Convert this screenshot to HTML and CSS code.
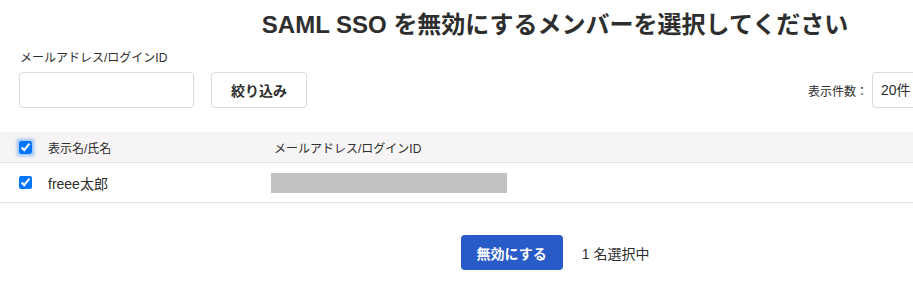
FILE: index.html
```html
<!DOCTYPE html>
<html lang="ja">
<head>
    <meta charset="UTF-8">
    <meta name="viewport" content="width=device-width, initial-scale=1.0">
    <title>SAML SSO 無効化</title>
    <link rel="stylesheet" href="styles.css">
</head>
<body>
    <div class="page">
        <h1 class="title">SAML SSO を無効にするメンバーを選択してください</h1>

        <div class="filters">
            <div class="filter-left">
                <div class="field">
                    <label class="field-label" for="email">メールアドレス/ログインID</label>
                    <input class="text-input" id="email" type="text">
                </div>
                <button class="button-plain">絞り込み</button>
            </div>
            <div class="filter-right">
                <span class="per-page-label">表示件数：</span>
                <div class="select-box">20件</div>
            </div>
        </div>

        <table class="members">
            <thead>
                <tr>
                    <th class="col-check"><input type="checkbox" class="check check-focus" checked></th>
                    <th class="col-name">表示名/氏名</th>
                    <th class="col-mail">メールアドレス/ログインID</th>
                </tr>
            </thead>
            <tbody>
                <tr>
                    <td class="col-check"><input type="checkbox" class="check" checked></td>
                    <td class="col-name">freee太郎</td>
                    <td class="col-mail"><span class="masked"></span></td>
                </tr>
            </tbody>
        </table>

        <div class="actions">
            <button class="button-primary">無効にする</button>
            <span class="selected-count">1 名選択中</span>
        </div>
    </div>
</body>
</html>
```

FILE: styles.css
```css
body {
    margin: 0;
    font-family: 'Liberation Sans', 'Noto Sans CJK JP', sans-serif;
    color: #2e2e2e;
    background: #fff;
    overflow: hidden;
}

.page {
    width: 1110px;
}

.title {
    margin: 0;
    padding-top: 9px;
    font-size: 24px;
    line-height: 32px;
    font-weight: bold;
    text-align: center;
}

.filters {
    display: flex;
    align-items: flex-end;
    margin-top: 9px;
    padding: 0 148px 0 19px;
}

.filter-left {
    display: flex;
    align-items: flex-end;
    gap: 17px;
}

.field {
    display: flex;
    flex-direction: column;
}

.field-label {
    font-size: 12px;
    line-height: 16px;
    margin-bottom: 6px;
    padding-left: 1px;
}

.text-input {
    box-sizing: border-box;
    width: 175px;
    height: 36px;
    margin: 0;
    border: 1px solid #d9d9d9;
    border-radius: 4px;
    padding: 0 8px;
    font: inherit;
}

.button-plain {
    box-sizing: border-box;
    height: 36px;
    padding: 0 19px;
    border: 1px solid #d9d9d9;
    border-radius: 4px;
    background: #fff;
    color: #2e2e2e;
    font-family: inherit;
    font-size: 14px;
    font-weight: bold;
}

.filter-right {
    margin-left: auto;
    display: flex;
    align-items: center;
}

.per-page-label {
    font-size: 12px;
    margin-right: 4px;
}

.select-box {
    box-sizing: border-box;
    width: 90px;
    height: 36px;
    border: 1px solid #d9d9d9;
    border-radius: 4px;
    padding-left: 8px;
    font-size: 14px;
    line-height: 34px;
}

.members {
    width: 100%;
    margin-top: 24px;
    border-collapse: collapse;
}

.members th {
    height: 30px;
    padding: 0;
    background: #f6f4f4;
    border-bottom: 1px solid #e3e3e3;
    font-size: 12px;
    font-weight: normal;
    text-align: left;
}

.members td {
    height: 39px;
    padding: 0;
    border-bottom: 1px solid #e3e3e3;
    font-size: 14px;
}

.col-check {
    width: 13px;
    padding-left: 19px !important;
    padding-right: 16px !important;
}

.col-name {
    width: 223px;
}

.members th.col-mail {
    padding-left: 3px;
}

.check {
    display: block;
    width: 13px;
    height: 13px;
    margin: 0;
}

.check-focus {
    box-shadow: 0 0 3px 2px rgba(40, 130, 255, 0.45);
    border-radius: 2px;
}

.masked {
    display: block;
    width: 236px;
    height: 20px;
    background: #c1c1c1;
}

.actions {
    display: flex;
    justify-content: center;
    align-items: center;
    gap: 19px;
    margin-top: 32px;
}

.button-primary {
    height: 35px;
    padding: 0 16px;
    border: none;
    border-radius: 4px;
    background: #285ac8;
    color: #fff;
    font-family: inherit;
    font-size: 14px;
    font-weight: bold;
}

.selected-count {
    font-size: 14px;
}
```
